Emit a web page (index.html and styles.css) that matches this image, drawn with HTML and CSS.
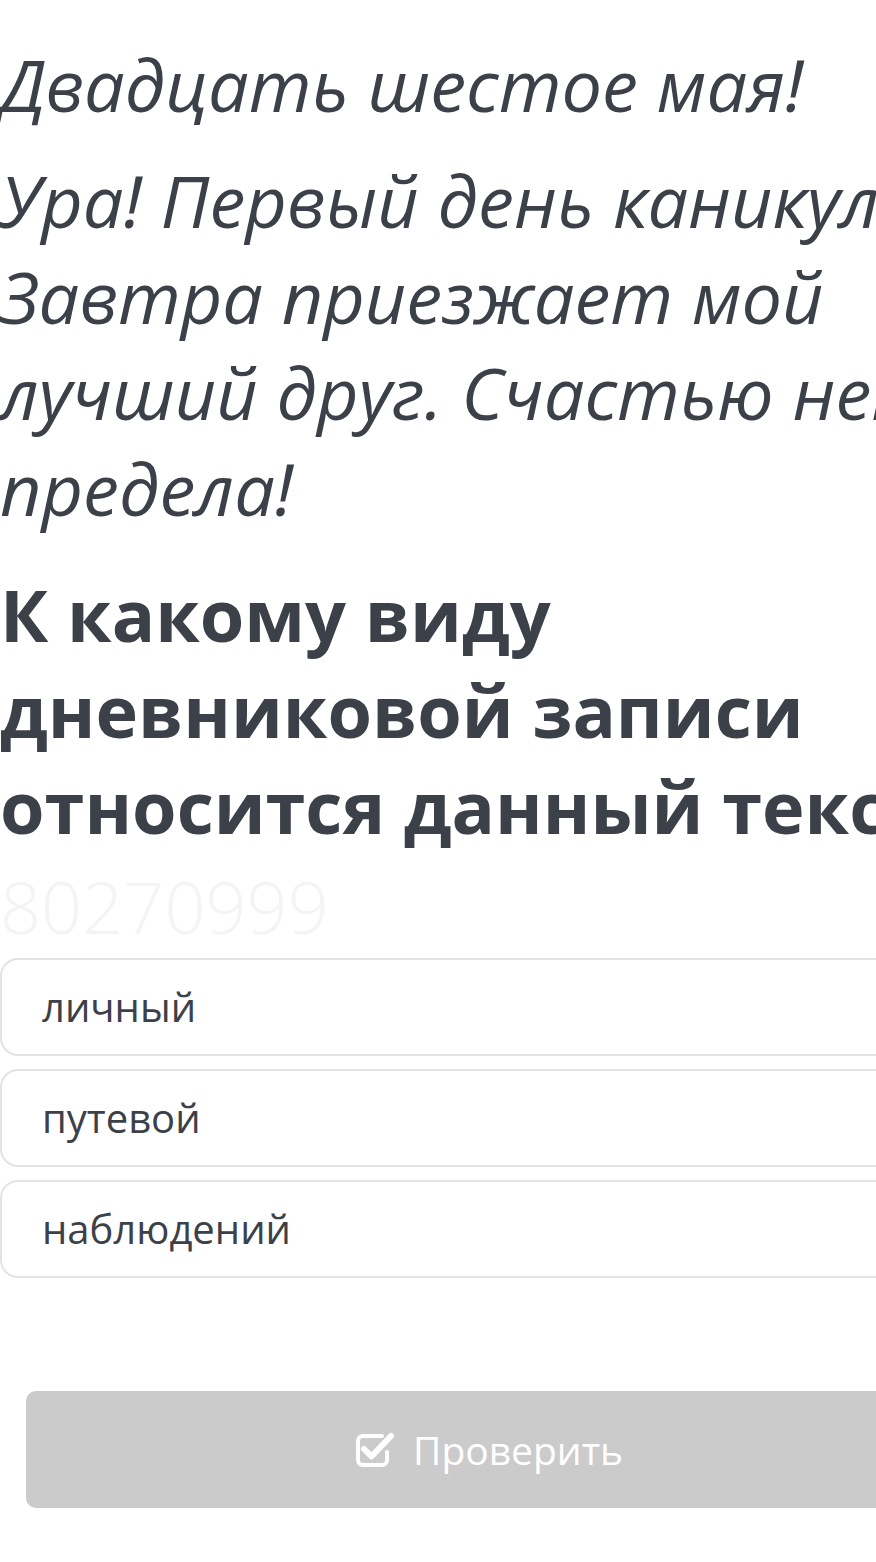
FILE: index.html
```html
<!DOCTYPE html>
<html lang="ru">
<head>
    <meta charset="UTF-8">
    <meta name="viewport" content="width=device-width, initial-scale=1.0">
    <title>Тест</title>
    <link rel="stylesheet" href="styles.css">
</head>
<body>
    <main class="quiz">
        <section class="quiz-text">
            <p>Двадцать шестое мая!</p>
            <p>Ура! Первый день каникул. Завтра приезжает мой лучший друг. Счастью нет предела!</p>
        </section>

        <h2 class="quiz-question">К какому виду дневниковой записи относится данный текст?</h2>
        <div class="quiz-id">80270999</div>

        <div class="quiz-options">
            <div class="option">личный</div>
            <div class="option">путевой</div>
            <div class="option">наблюдений</div>
        </div>

        <button class="check-btn" type="button">
            <svg class="check-icon" width="40" height="36" viewBox="0 0 40 36" aria-hidden="true">
                <path d="M27 4 H8 A5 5 0 0 0 3 9 V28 A5 5 0 0 0 8 33 H27 A5 5 0 0 0 32 28 V20" fill="none" stroke="#fff" stroke-width="4" stroke-linecap="round"/>
                <path d="M9 17 L16.5 24.5 L36 4" fill="none" stroke="#fff" stroke-width="6" stroke-linecap="round" stroke-linejoin="round"/>
            </svg>
            Проверить
        </button>
    </main>
</body>
</html>
```

FILE: styles.css
```css
html, body {
    margin: 0;
    overflow-x: hidden;
    background: #fff;
}

body {
    font-family: "Open Sans", "Noto Sans", sans-serif;
    color: #3c4149;
}

.quiz {
    width: 978px;
    padding-top: 36px;
}

.quiz-text p {
    margin: 0 0 20px;
    font-size: 72px;
    line-height: 96px;
    font-style: italic;
    font-weight: 400;
}

.quiz-text p:last-child {
    margin-bottom: 30px;
}

.quiz-question {
    margin: 0;
    font-size: 72px;
    line-height: 96px;
    font-weight: 700;
}

.quiz-id {
    font-size: 72px;
    line-height: 104px;
    font-weight: 300;
    color: #f4f4f4;
}

.quiz-options {
    display: flex;
    flex-direction: column;
    gap: 13px;
}

.option {
    border: 2px solid #e1e4e6;
    border-radius: 18px;
    padding: 16px 40px;
    font-size: 40px;
    line-height: 62px;
}

.check-btn {
    display: flex;
    align-items: center;
    justify-content: center;
    gap: 18px;
    width: 926px;
    height: 117px;
    margin: 113px 0 0 26px;
    border: none;
    border-radius: 10px;
    background: #cbcbcb;
    color: #fff;
    font-family: "Open Sans", "Noto Sans", sans-serif;
    font-size: 39px;
    padding: 0;
}

.check-icon {
    display: block;
}
```
